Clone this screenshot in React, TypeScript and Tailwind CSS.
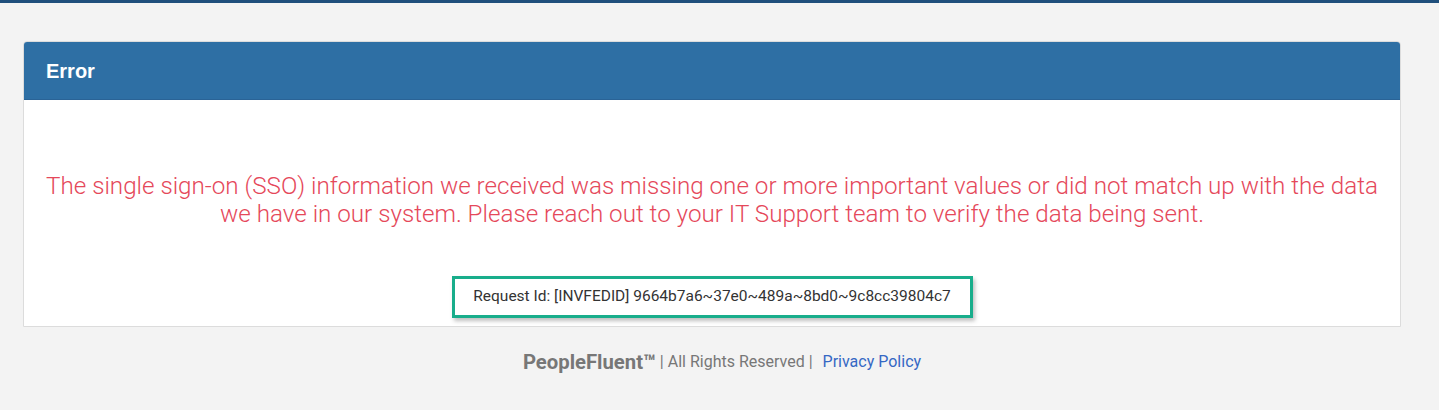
const App = () => {
  return (
    <div className="min-h-[410px] w-full bg-[#f3f3f3] font-['Roboto',sans-serif]">
      <div className="h-[3px] bg-[#1f4f7c]" />
      <div className="pt-[38px]">
        <div className="ml-[23px] w-[1378px] rounded-t-[4px] border border-[#dcdcdc] bg-white">
          <div className="flex h-[58px] items-center rounded-t-[3px] border-b border-[#2a6396] bg-[#2e6fa4] px-[22px]">
            <p className="font-['Liberation_Sans',sans-serif] text-[20px] font-bold text-white">Error</p>
          </div>
          <div className="flex flex-col items-center pt-[72px] pb-[8px]">
            <p className="px-[10px] text-center text-[24.2px] leading-[28px] font-light whitespace-nowrap text-[#e5485a]">
              The single sign-on (SSO) information we received was missing one or more important values or did not match up with the data
              <br />
              we have in our system. Please reach out to your IT Support team to verify the data being sent.
            </p>
            <div className="mt-[48px] flex h-[42px] w-[521px] items-center justify-center border-[3px] border-[#18ad8b] shadow-[2px_3px_4px_rgba(0,0,0,0.25)]">
              <p className="text-[15.5px] text-[#333333]">Request Id: [INVFEDID] 9664b7a6~37e0~489a~8bd0~9c8cc39804c7</p>
            </div>
          </div>
        </div>
        <div className="mt-[20px] flex items-center justify-center pl-[5px] text-[#777777]">
          <span className="text-[20.3px] font-bold">PeopleFluent™</span>
          <span className="ml-[4px] text-[16px]">| All Rights Reserved |</span>
          <a href="#" className="ml-[10px] text-[16px] text-[#3568c4]">
            Privacy Policy
          </a>
        </div>
      </div>
    </div>
  );
};

export default App;
